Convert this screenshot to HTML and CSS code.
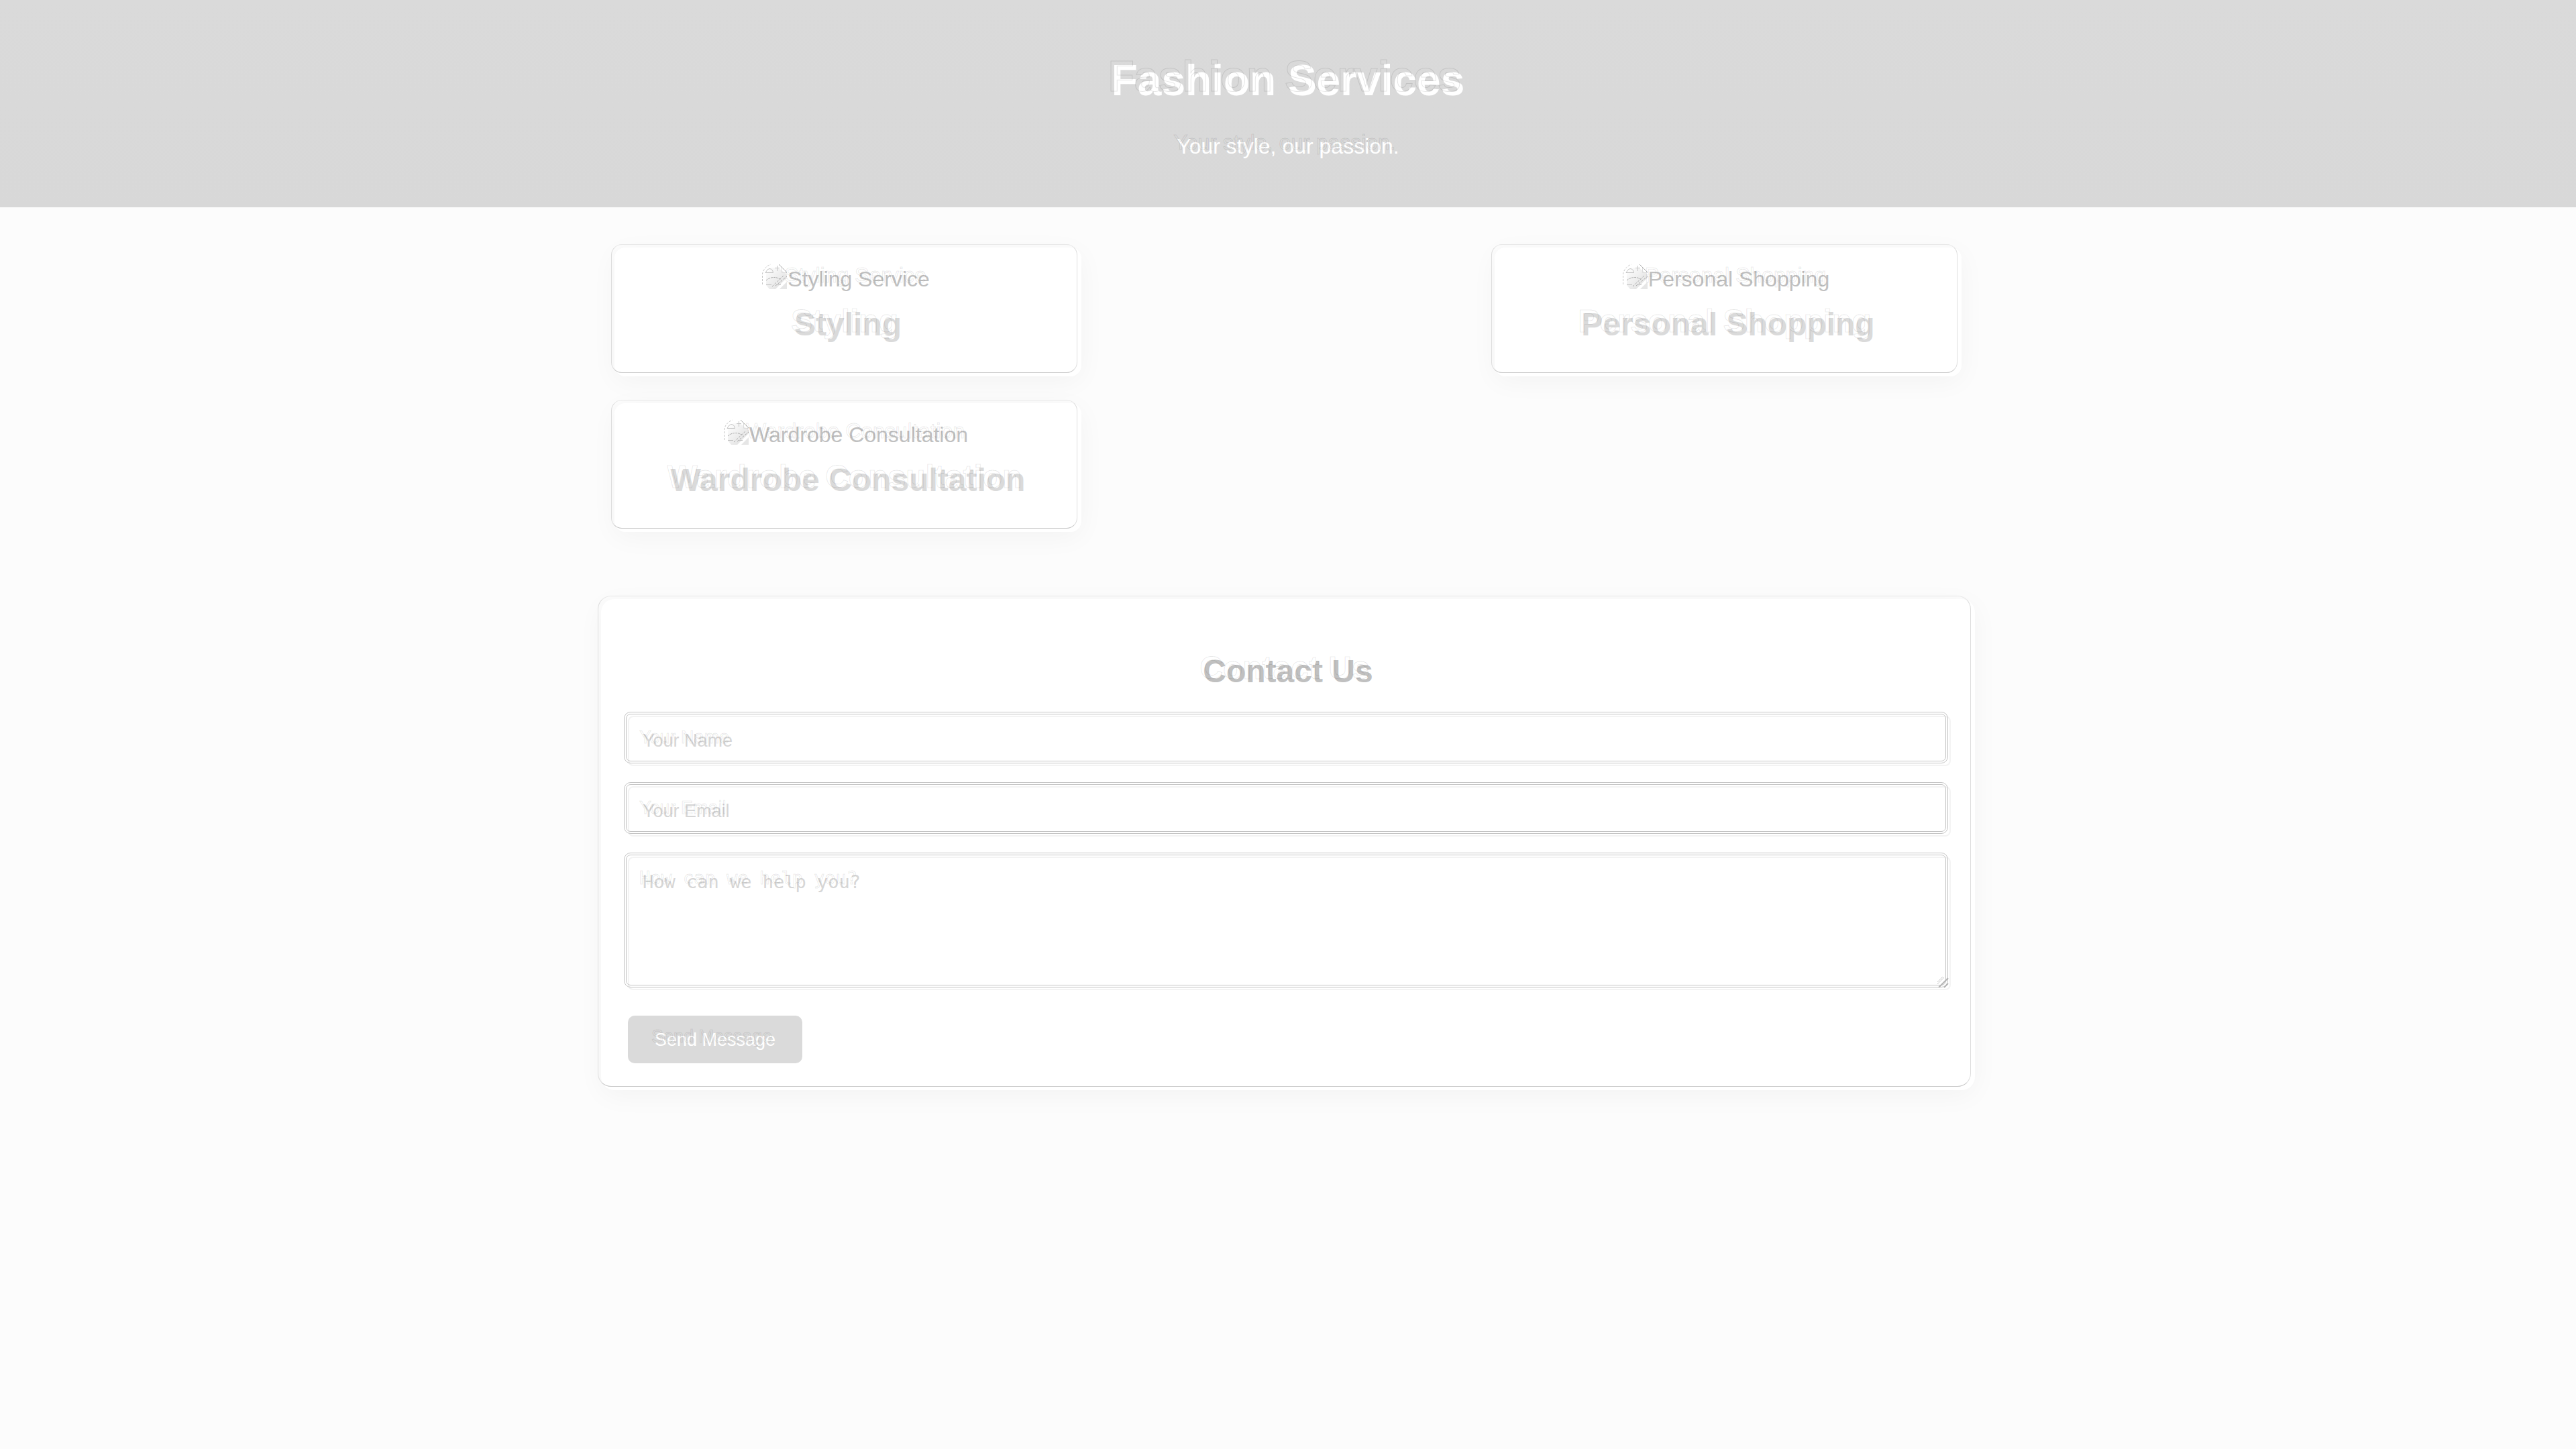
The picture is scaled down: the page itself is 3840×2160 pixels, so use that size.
FILE: index.html
```html
<!DOCTYPE html>
<html lang="en">
<head>
<meta charset="utf-8">
<title>Fashion Services</title>
<link rel="stylesheet" href="styles.css">
</head>
<body>
<svg class="defs" width="0" height="0" aria-hidden="true">
  <defs>
    <linearGradient id="sheet" x1="0" y1="0" x2="1" y2="1">
      <stop offset="0" stop-color="#ffffff"/>
      <stop offset="1" stop-color="#dcdcdc"/>
    </linearGradient>
    <symbol id="picture" viewBox="0 0 38 38">
      <path d="M6 14 L14 6 H24 L37 16 V21 L20 38 H11 L6 32 Z" fill="url(#sheet)"/>
      <path d="M37 27 V38 H26 Z" fill="#e6e6e6"/>
      <g fill="none" stroke="#c4c4c4" stroke-width="1">
        <path d="M.5 31 V15 Q3 5 13 1" stroke-dasharray="3 2"/>
        <path d="M25 1 L37 13" stroke="#aaa"/>
        <path d="M29.500 6 V13.500 H37" stroke="#dcdcdc"/>
        <path d="M5 13.500 Q8 7.500 11 7.500 Q16 8 16.500 13.500 Z"/>
        <path d="M22.500 3 V11 M19 6.500 H26"/>
        <path d="M6 25 Q11 20.500 18 20.500 Q23 20.500 28 24" stroke="#aaa" stroke-dasharray="3 1"/>
        <path d="M6 31.500 H14 M22 31.500 H28"/>
        <path d="M15 34 L33 17 M20 33 L37 19" stroke="#aaa" stroke-dasharray="3 2"/>
      </g>
    </symbol>
  </defs>
</svg>

<header class="header">
  <h1 class="title echo" data-echo="Fashion Services">Fashion Services</h1>
  <p class="tagline echo" data-echo="Your style, our passion.">Your style, our passion.</p>
</header>

<main class="main">
  <section class="services">
    <article class="card">
      <div class="picture"><svg class="picture-icon" aria-hidden="true"><use href="#picture"/></svg><span class="echo" data-echo="Styling Service">Styling Service</span></div>
      <h2 class="card-title"><span class="echo" data-echo="Styling">Styling</span></h2>
    </article>
    <article class="card">
      <div class="picture"><svg class="picture-icon" aria-hidden="true"><use href="#picture"/></svg><span class="echo" data-echo="Personal Shopping">Personal Shopping</span></div>
      <h2 class="card-title"><span class="echo" data-echo="Personal Shopping">Personal Shopping</span></h2>
    </article>
    <article class="card">
      <div class="picture"><svg class="picture-icon" aria-hidden="true"><use href="#picture"/></svg><span class="echo" data-echo="Wardrobe Consultation">Wardrobe Consultation</span></div>
      <h2 class="card-title"><span class="echo" data-echo="Wardrobe Consultation">Wardrobe Consultation</span></h2>
    </article>
  </section>

  <form class="contact">
    <h2 class="contact-title"><span class="echo" data-echo="Contact Us">Contact Us</span></h2>
    <label class="field" data-echo="Your Name"><input class="control" type="text" placeholder="Your Name" aria-label="Your Name"></label>
    <label class="field" data-echo="Your Email"><input class="control" type="email" placeholder="Your Email" aria-label="Your Email"></label>
    <label class="field field-area" data-echo="How can we help you?"><textarea class="control area" placeholder="How can we help you?" aria-label="How can we help you?"></textarea>
      <svg class="grip" viewBox="0 0 18 18" aria-hidden="true"><path d="M1 12 L11 2 M1 9 L9 1" stroke="#c8c8c8" stroke-width="1" fill="none"/><path d="M3 17 L17 3 M11 17 L17 11" stroke="#b4b4b4" stroke-width="2" fill="none"/></svg>
    </label>
    <button class="send" type="submit"><span class="echo" data-echo="Send Message">Send Message</span></button>
  </form>
</main>
</body>
</html>
```
FILE: styles.css
```css
* {
  box-sizing: border-box;
}

body {
  margin: 0;
  min-height: 100vh;
  background: #fcfcfc;
  font-family: "Liberation Sans", Arial, sans-serif;
  font-size: 32px;
  line-height: 36px;
}

h1, h2, p {
  margin: 0;
}

.defs {
  position: absolute;
}

.header {
  display: flex;
  flex-direction: column;
  align-items: center;
  gap: 44px;
  padding: 84px 20px 73px;
  background: linear-gradient(#dadada, #d8d8d8);
  color: #fff;
}

.title {
  font-size: 64px;
  line-height: 72px;
}

/* Fine outline that trails up and to the left of the lettering */
.echo {
  position: relative;
}

.echo::before {
  content: attr(data-echo);
  position: absolute;
  top: -6px;
  left: -5px;
  white-space: nowrap;
  color: transparent;
  -webkit-text-stroke: 1px rgba(0, 0, 0, 0.1);
  pointer-events: none;
}

.main {
  max-width: 2048px;
  margin: 0 auto;
}

.services {
  display: flex;
  flex-wrap: wrap;
  justify-content: space-between;
  gap: 40px;
  padding: 60px 20px 100px;
}

.card,
.contact {
  position: relative;
  background: #fff;
  box-shadow: 0 8px 40px rgba(0, 0, 0, 0.04);
}

.card {
  width: 696px;
  padding: 29px 20px 49px;
  border-radius: 16px;
  text-align: center;
}

.card::after,
.contact::after {
  content: "";
  position: absolute;
  inset: -5px 6px 5px -5px;
  border: 1px solid #dedede;
  border-top-color: #e8e8e8;
  border-bottom-color: #c8c8c8;
  border-radius: 16px;
  pointer-events: none;
}

.picture {
  display: flex;
  justify-content: center;
  height: 36px;
  color: #c0c0c0;
}

.picture-icon {
  width: 38px;
  height: 38px;
  margin: -5px 0 0 -6px;
}

.card-title,
.contact-title {
  font-size: 48px;
  line-height: 56px;
}

.card-title {
  margin-top: 22px;
  color: #dadada;
}

.contact {
  display: flex;
  flex-direction: column;
  align-items: stretch;
  gap: 30px;
  padding: 80px 36px 40px 40px;
  border-radius: 20px;
}

.contact::after {
  border-radius: 20px;
}

.contact-title {
  margin: 0 4px 8px 0;
  color: #c0c0c0;
  text-align: center;
}

.field {
  display: block;
  position: relative;
  font-size: 27px;
  line-height: 32px;
}

.field::before {
  content: "";
  position: absolute;
  inset: -6px 4px 4px -6px;
  border: 1px solid #c4c4c4;
  border-radius: 10px;
  outline: 1px solid #c4c4c4;
  outline-offset: -4px;
  pointer-events: none;
}

.field::after {
  content: attr(data-echo);
  position: absolute;
  top: 16px;
  left: 17px;
  color: transparent;
  -webkit-text-stroke: 1px rgba(0, 0, 0, 0.1);
  pointer-events: none;
}

.control {
  display: block;
  width: 100%;
  height: 75px;
  margin: 0;
  padding: 20px;
  border: 2px solid #f3f3f3;
  border-radius: 8px;
  background: #fff;
  color: #c0c0c0;
  font-family: inherit;
  font-size: 27px;
  line-height: 32px;
}

.control::placeholder {
  color: #d6d6d6;
  opacity: 1;
}

.area {
  height: 199px;
  resize: none;
}

.area,
.field-area {
  font-family: "DejaVu Sans Mono", monospace;
}

.grip {
  position: absolute;
  right: 3px;
  bottom: 3px;
  width: 18px;
  height: 18px;
}

.send {
  align-self: flex-start;
  height: 71px;
  margin-top: 8px;
  padding: 0 40px;
  border: 0;
  border-radius: 10px;
  background: #dadada;
  color: #fff;
  font-family: inherit;
  font-size: 27px;
  line-height: 32px;
}
```
